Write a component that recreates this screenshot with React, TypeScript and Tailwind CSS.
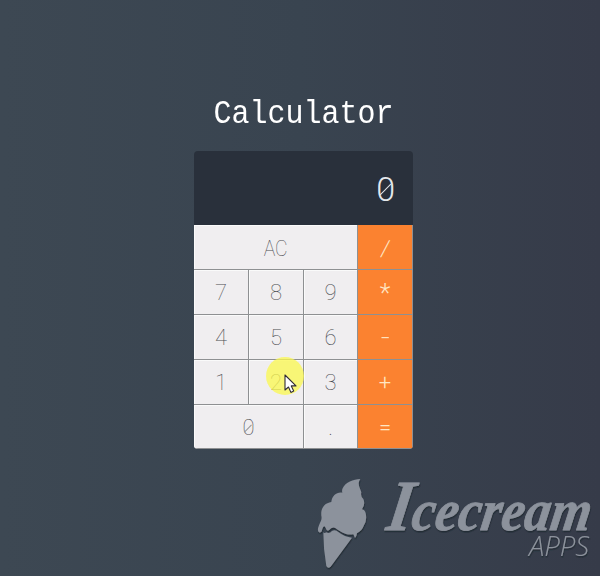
type Key = { label: string; className: string; operator?: boolean };

const keys: Key[] = [
  { label: "AC", className: "col-span-3" },
  { label: "/", className: "", operator: true },
  { label: "7", className: "" },
  { label: "8", className: "" },
  { label: "9", className: "" },
  { label: "*", className: "", operator: true },
  { label: "4", className: "" },
  { label: "5", className: "" },
  { label: "6", className: "" },
  { label: "-", className: "", operator: true },
  { label: "1", className: "" },
  { label: "2", className: "" },
  { label: "3", className: "" },
  { label: "+", className: "", operator: true },
  { label: "0", className: "col-span-2" },
  { label: ".", className: "" },
  { label: "=", className: "", operator: true },
];

function Zero({ large = false }: { large?: boolean }) {
  return (
    <span className="relative inline-block">
      0
      <span
        className={
          large
            ? "absolute top-[17px] left-[2px] h-px w-[15px] -rotate-45 bg-[#e4e8ec]"
            : "absolute top-[11px] left-[1px] h-px w-[10px] -rotate-45 bg-[#96979a]"
        }
      />
    </span>
  );
}

function KeyButton({ label, className, operator }: Key) {
  return (
    <button
      className={`flex items-center justify-center border-r border-b border-[#8e9092] pt-[2px] text-[22px] leading-none ${
        operator
          ? "bg-[#fb8230] font-light text-[#ffe6c4]"
          : "bg-[#f0eef0] font-thin text-[#4b4d51] shadow-[inset_1px_1px_0_#fafafa]"
      } ${className}`}
    >
      {label === "0" ? (
        <Zero />
      ) : label === "AC" ? (
        <span className="translate-y-px scale-x-[0.88]">AC</span>
      ) : label === "/" ? (
        <span className="translate-y-px skew-x-[-8deg]">/</span>
      ) : label === "*" ? (
        <span className="text-[25px]">*</span>
      ) : label === "-" ? (
        <span className="scale-x-[1.4]">-</span>
      ) : (
        label
      )}
    </button>
  );
}

function Pointer() {
  return (
    <div className="pointer-events-none absolute top-[206px] left-[72px] size-[38px]">
      <div className="size-[38px] rounded-full bg-[#fbf84e]/75" />
      <svg className="absolute top-[17px] left-[18px]" width="14" height="20" viewBox="0 0 14 20">
        <path d="M1 1v15l3.5-3 2.4 5.4 2.8-1.3-2.4-5.2H12z" fill="#fff" stroke="#302b35" strokeWidth="1.1" strokeLinejoin="round" />
      </svg>
    </div>
  );
}

function Watermark() {
  return (
    <svg className="absolute right-0 bottom-0" width="295" height="106" viewBox="0 0 295 106">
      <defs>
        <filter id="shade" x="-10%" y="-10%" width="120%" height="130%">
          <feDropShadow dx="0.5" dy="1.5" stdDeviation="0.6" floodColor="#1f2733" floodOpacity="0.9" />
        </filter>
      </defs>
      <g fill="#8c929c" filter="url(#shade)">
        <g transform="scale(.33333)">
          <path d="M166 27C145 29 121 36 113 55Q110 62 112 68C96 65 81 76 79 96C58 99 47 115 49 137Q51 145 48 152Q44 160 41 169Q36 182 42 187Q50 190 52 177Q57 162 62 174Q65 185 72 181Q82 168 92 175C107 186 122 197 145 193L150 204Q155 200 156 190Q171 183 177 166Q187 149 182 130Q180 120 171 118Q182 103 175 87Q166 80 169 67C166 54 155 43 166 27Z" />
          <path d="M55 186Q57 191 64 187Q73 192 81 183Q91 177 101 187Q119 201 141 203L77 290Q69 297 64 288Q55 238 55 186Z" />
        </g>
        <text x="0" y="0" transform="translate(80 60) skewX(-9)" fontFamily="'Liberation Serif', serif" fontSize="58" fontStyle="italic" fontWeight="700" textLength="204" lengthAdjust="spacingAndGlyphs" stroke="#8c929c" strokeWidth="0.8" strokeLinejoin="round">
          <tspan fontSize="72">I</tspan>cecream
        </text>
        <text x="224" y="86" fontFamily="'Open Sans', 'Noto Sans', sans-serif" fontSize="27" fontStyle="italic" fontWeight="300" textLength="60" lengthAdjust="spacingAndGlyphs">
          APPS
        </text>
      </g>
    </svg>
  );
}

export default function App() {
  return (
    <main className="relative h-[576px] w-[600px] overflow-hidden bg-linear-to-r from-[#3d4853] via-[#394450] to-[#363b49] font-['Roboto','Noto_Sans',sans-serif]">
      <div className="ml-[194px] flex w-[219px] flex-col pt-[93px]">
        <h1 className="flex h-[41px] origin-center scale-y-[1.12] items-center justify-center font-['Liberation_Mono',monospace] text-[30px] leading-none font-normal text-white">
          Calculator
        </h1>
        <section className="relative mt-[17px]">
          <div className="overflow-hidden rounded-[4px]">
            <div className="flex h-[74px] items-center justify-end bg-[#29303b] pt-[1px] pr-[18px] text-[34px] leading-none font-light text-[#e4e8ec]">
              <Zero large />
            </div>
            <div className="grid grid-cols-[55px_55px_54px_55px] grid-rows-[45px_45px_45px_45px_44px]">
              {keys.map((key) => (
                <KeyButton key={key.label} {...key} />
              ))}
            </div>
          </div>
          <Pointer />
        </section>
      </div>
      <Watermark />
    </main>
  );
}
